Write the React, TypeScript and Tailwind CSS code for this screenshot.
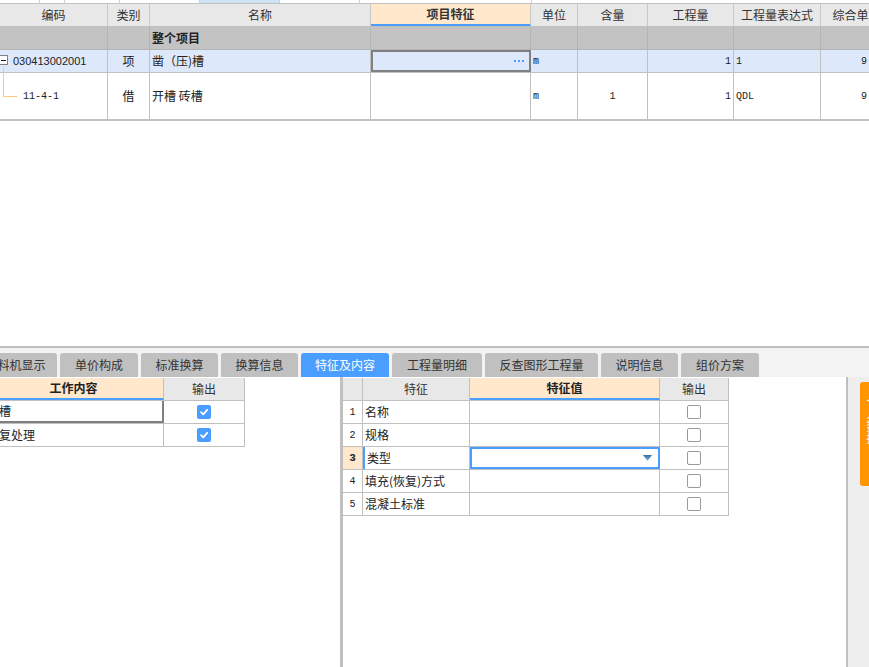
import React from 'react';

const FONT = { fontFamily: '"Noto Sans CJK SC", "Liberation Sans", sans-serif' };

// top grid column widths (left to right)
const COL = ['w-[108px]', 'w-[42px]', 'w-[221px]', 'w-[160px]', 'w-[47px]', 'w-[70px]', 'w-[86px]', 'w-[87px]', 'w-[60px]'];

const Checked = () => (
  <span className="flex items-center justify-center w-[14px] h-[14px] rounded-[2px] bg-[#4a9eff]">
    <svg width="10" height="10" viewBox="0 0 10 10">
      <path d="M2 5.2 L4.2 7.3 L8.2 2.8" stroke="#fff" strokeWidth="1.8" fill="none" strokeLinecap="round" strokeLinejoin="round" />
    </svg>
  </span>
);

const Unchecked = () => <span className="block w-[14px] h-[14px] rounded-[2px] border border-[#9a9a9a] bg-white" />;

const Caret = () => (
  <svg width="9" height="6" viewBox="0 0 9 6">
    <defs>
      <linearGradient id="cg" x1="0" y1="0" x2="0" y2="1">
        <stop offset="0" stopColor="#2f6aa3" />
        <stop offset="1" stopColor="#8cc0ef" />
      </linearGradient>
    </defs>
    <path d="M0 0 H9 L4.5 6 Z" fill="url(#cg)" />
  </svg>
);

const mono = 'font-["Liberation_Mono",monospace] text-[10px]';

function TopGrid() {
  const headers = ['编码', '类别', '名称', '项目特征', '单位', '含量', '工程量', '工程量表达式', '综合单'];
  return (
    <div className="h-[346px] bg-white">
      {/* strip of the row above */}
      <div className="flex h-[4px] border-b border-[#c0c0c0]">
        <div className="w-[40px] border-r border-[#d0d0d0]" />
        <div className="w-[25px] border-r border-[#d0d0d0]" />
        <div className="w-[55px] border-r border-[#d0d0d0]" />
        <div className="w-[80px] border-r border-[#d0d0d0]" />
        <div className="w-[80px] bg-[#cfe3f7] border-r border-[#d0d0d0]" />
        <div className="w-[80px] border-r border-[#d0d0d0]" />
        <div className="w-[172px] border-r border-[#d0d0d0]" />
        <div className="flex-1" />
      </div>
      {/* header */}
      <div className="flex h-[23px] bg-[#e8e8e8] border-b border-[#c0c0c0] text-[12px] text-[#333]">
        {headers.map((h, i) =>
          i === 3 ? (
            <div key={h} className={`${COL[i]} shrink-0 flex items-center justify-center bg-[#ffe8cc] border-r border-[#c8c8c8] border-b-2 border-b-[#4a9eff] font-bold`}>
              {h}
            </div>
          ) : (
            <div key={h} className={`${COL[i]} shrink-0 flex items-center justify-center border-r border-[#c8c8c8]`}>
              {h}
            </div>
          )
        )}
      </div>
      {/* whole project row */}
      <div className="flex h-[23px] bg-[#c3c3c3] border-b border-[#b4b4b4] text-[12px] text-[#222]">
        {COL.map((c, i) => (
          <div key={i} className={`${c} shrink-0 border-r border-[#b4b4b4] flex items-center pl-[2px] font-bold`}>
            {i === 2 ? '整个项目' : ''}
          </div>
        ))}
      </div>
      {/* item row */}
      <div className="flex h-[23px] bg-[#dde9fb] border-b border-[#c0c0c0] text-[12px] text-[#222]">
        <div className={`${COL[0]} shrink-0 border-r border-[#c0c0c0] flex items-center relative`}>
          <span className="absolute left-[-1px] top-[5px] w-[9px] h-[10px] border border-[#808080] bg-white flex items-center justify-center">
            <span className="block w-[5px] h-[1px] bg-[#222]" />
          </span>
          <span className="pl-[13px] font-['Liberation_Sans',sans-serif] text-[11px]">030413002001</span>
        </div>
        <div className={`${COL[1]} shrink-0 border-r border-[#c0c0c0] flex items-center justify-center`}>项</div>
        <div className={`${COL[2]} shrink-0 border-r border-[#c0c0c0] flex items-center pl-[2px]`}>凿（压)槽</div>
        <div className={`${COL[3]} shrink-0 border-2 border-[#808080] flex items-center justify-end gap-[2px] pr-[5px]`}>
          <span className="block w-[2px] h-[2px] bg-[#4a9eff]" />
          <span className="block w-[2px] h-[2px] bg-[#4a9eff]" />
          <span className="block w-[2px] h-[2px] bg-[#4a9eff]" />
        </div>
        <div className={`${COL[4]} shrink-0 border-r border-[#c0c0c0] flex items-center pl-[2px] text-[#111] ${mono}`}>m</div>
        <div className={`${COL[5]} shrink-0 border-r border-[#c0c0c0]`} />
        <div className={`${COL[6]} shrink-0 border-r border-[#c0c0c0] flex items-center justify-end pr-[2px] ${mono}`}>1</div>
        <div className={`${COL[7]} shrink-0 border-r border-[#c0c0c0] flex items-center pl-[2px] ${mono}`}>1</div>
        <div className={`${COL[8]} shrink-0 flex items-center justify-end pr-[14px] ${mono}`}>9</div>
      </div>
      {/* child row */}
      <div className="flex h-[48px] bg-white border-b-2 border-[#c0c0c0] text-[12px] text-[#222]">
        <div className={`${COL[0]} shrink-0 border-r border-[#c0c0c0] flex items-center relative`}>
          <span className="absolute left-[3px] top-[-6px] w-[14px] h-[30px] border-l border-b border-[#ffc880]" />
          <span className={`pl-[23px] ${mono}`}>11-4-1</span>
        </div>
        <div className={`${COL[1]} shrink-0 border-r border-[#c0c0c0] flex items-center justify-center`}>借</div>
        <div className={`${COL[2]} shrink-0 border-r border-[#c0c0c0] flex items-center pl-[2px]`}>开槽 砖槽</div>
        <div className={`${COL[3]} shrink-0 border-r border-[#c0c0c0]`} />
        <div className={`${COL[4]} shrink-0 border-r border-[#c0c0c0] flex items-center pl-[2px] text-[#111] ${mono}`}>m</div>
        <div className={`${COL[5]} shrink-0 border-r border-[#c0c0c0] flex items-center justify-center ${mono}`}>1</div>
        <div className={`${COL[6]} shrink-0 border-r border-[#c0c0c0] flex items-center justify-end pr-[2px] ${mono}`}>1</div>
        <div className={`${COL[7]} shrink-0 border-r border-[#c0c0c0] flex items-center pl-[2px] ${mono}`}>QDL</div>
        <div className={`${COL[8]} shrink-0 flex items-center justify-end pr-[14px] ${mono}`}>9</div>
      </div>
    </div>
  );
}

function Tabs() {
  const tabs = [
    { t: '工料机显示', w: 'w-[83px]' },
    { t: '单价构成', w: 'w-[78px]' },
    { t: '标准换算', w: 'w-[77px]' },
    { t: '换算信息', w: 'w-[77px]' },
    { t: '特征及内容', w: 'w-[88px]', active: true },
    { t: '工程量明细', w: 'w-[90px]' },
    { t: '反查图形工程量', w: 'w-[113px]' },
    { t: '说明信息', w: 'w-[77px]' },
    { t: '组价方案', w: 'w-[78px]' },
  ];
  return (
    <div className="h-[31px] border-t-2 border-[#c0c0c0] bg-[#f3f3f3] pt-[5px] flex overflow-hidden">
      <div className="flex gap-[3px] ml-[-26px]">
        {tabs.map((tab) => (
          <div
            key={tab.t}
            className={`${tab.w} shrink-0 h-[24px] rounded-t-[3px] flex items-center justify-center text-[12px] ${
              tab.active ? 'bg-[#4a9eff] text-white' : 'bg-[#c0c0c0] text-[#333]'
            }`}
          >
            {tab.t}
          </div>
        ))}
      </div>
    </div>
  );
}

function WorkTable() {
  return (
    <div className="w-[261px] ml-[-16px] text-[12px] text-[#222]">
      <div className="flex h-[23px] border-b border-[#c0c0c0]">
        <div className="w-[180px] bg-[#ffe8cc] border-r border-[#c0c0c0] border-b-2 border-b-[#4a9eff] flex items-center justify-center font-bold">工作内容</div>
        <div className="w-[81px] bg-[#e8e8e8] border-r border-[#c0c0c0] flex items-center justify-center text-[#333]">输出</div>
      </div>
      <div className="flex h-[23px] border-b border-[#c0c0c0]">
        <div className="w-[180px] border-r-2 border-b-2 border-[#808080] flex items-center pl-[3px]">开槽</div>
        <div className="w-[81px] border-r border-[#c0c0c0] flex items-center justify-center"><Checked /></div>
      </div>
      <div className="flex h-[23px] border-b border-[#c0c0c0]">
        <div className="w-[180px] border-r border-[#c0c0c0] flex items-center pl-[3px]">恢复处理</div>
        <div className="w-[81px] border-r border-[#c0c0c0] flex items-center justify-center"><Checked /></div>
      </div>
    </div>
  );
}

function FeatureTable() {
  const rows = ['名称', '规格', '类型', '填充(恢复)方式', '混凝土标准'];
  return (
    <div className="w-[386px] text-[12px] text-[#222]">
      <div className="flex h-[23px] border-b border-[#c0c0c0] bg-[#e8e8e8] text-[#333]">
        <div className="w-[20px] border-r border-[#c0c0c0]" />
        <div className="w-[107px] border-r border-[#c0c0c0] flex items-center justify-center">特征</div>
        <div className="w-[190px] bg-[#ffe8cc] border-r border-[#c0c0c0] border-b-2 border-b-[#4a9eff] flex items-center justify-center font-bold text-[#222]">特征值</div>
        <div className="w-[69px] border-r border-[#c0c0c0] flex items-center justify-center">输出</div>
      </div>
      {rows.map((r, i) => {
        const sel = i === 2;
        return (
          <div key={r} className="flex h-[23px] border-b border-[#c0c0c0]">
            <div className={`w-[20px] border-r border-[#c0c0c0] flex items-center justify-center ${mono} ${sel ? 'bg-[#ffe8cc] font-bold text-[11px]' : ''}`}>{i + 1}</div>
            <div className={`w-[107px] border-r border-[#c0c0c0] flex items-center pl-[2px] ${sel ? 'border-l-2 border-l-[#4a9eff]' : ''}`}>{r}</div>
            {sel ? (
              <div className="w-[190px] border-2 border-[#4a9eff] flex items-center justify-end pr-[6px]"><Caret /></div>
            ) : (
              <div className="w-[190px] border-r border-[#c0c0c0]" />
            )}
            <div className="w-[69px] border-r border-[#c0c0c0] flex items-center justify-center"><Unchecked /></div>
          </div>
        );
      })}
    </div>
  );
}

export default function App() {
  return (
    <div className="w-full h-[667px] overflow-hidden bg-white flex flex-col" style={FONT}>
      <TopGrid />
      <Tabs />
      <div className="flex-1 flex min-h-0">
        <div className="w-[340px] shrink-0 pt-[1px] overflow-hidden">
          <WorkTable />
        </div>
        <div className="w-[3px] shrink-0 bg-[#c0c0c0]" />
        <div className="w-[503px] shrink-0 pt-[1px]">
          <FeatureTable />
        </div>
        <div className="w-[2px] shrink-0 bg-[#c0c0c0]" />
        <div className="flex-1 bg-[#eeeeee] pt-[5px] pl-[12px] overflow-hidden">
          <div className="w-[20px] h-[104px] rounded-l-[3px] bg-[#ff9500] text-white text-[12px] leading-[16px] pt-[14px] pl-[4px] [writing-mode:vertical-rl]">
            个人数据
          </div>
        </div>
      </div>
    </div>
  );
}
